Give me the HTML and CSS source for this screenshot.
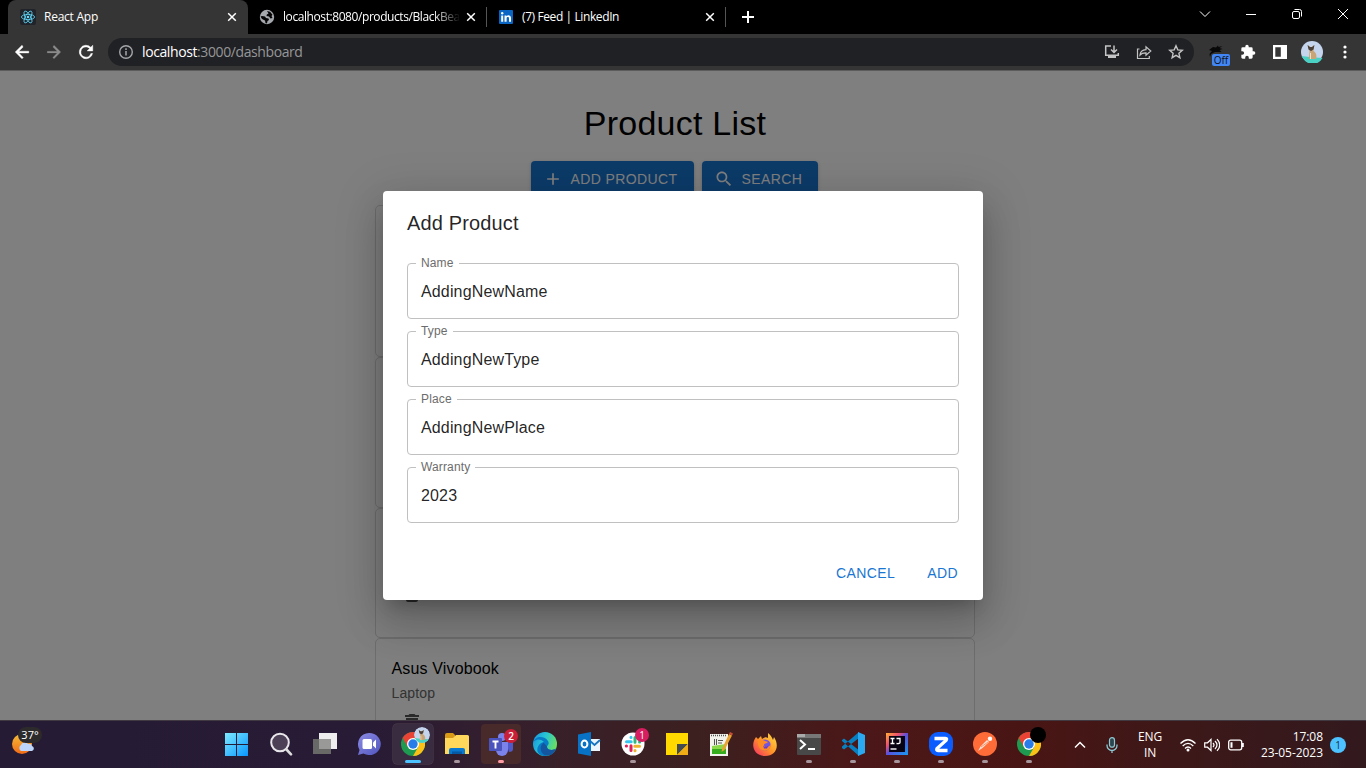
FILE: index.html
```html
<!DOCTYPE html>
<html lang="en">
<head>
<meta charset="utf-8">
<title>React App</title>
<link rel="stylesheet" href="styles.css">
</head>
<body>
<div class="screen">
  <header class="tabs">
    <div class="tab tab-active">
      <svg class="favicon" viewBox="0 0 16 16"><rect width="16" height="16" rx="2" fill="#20232a"/><g fill="none" stroke="#61dafb" stroke-width=".8"><ellipse cx="8" cy="8" rx="6.6" ry="2.6"/><ellipse cx="8" cy="8" rx="6.6" ry="2.6" transform="rotate(60 8 8)"/><ellipse cx="8" cy="8" rx="6.6" ry="2.6" transform="rotate(120 8 8)"/></g><circle cx="8" cy="8" r="1.3" fill="#61dafb"/></svg>
      <span class="tab-title title-react">React App</span>
      <svg class="close" viewBox="0 0 10 10"><path d="M1.2 1.2l7.6 7.6M8.8 1.2L1.2 8.8"/></svg>
    </div>
    <div class="tab tab-second">
      <svg class="favicon" viewBox="0 0 16 16"><circle cx="8" cy="8" r="7.2" fill="#a5a9ae"/><path d="M1.500 7.500l1.500-.5 3 .5 1 1.500 2.500.500.500 1.500-1.500 1-.5 2.500-1.500-.5-.5-2.500-3-1.500z" fill="#050505"/><path d="M8 2l3 .8 2.500 3-1 1.200 1 2-2 .5-1.500-2-2.500-.5.3-1.500 1.700-1z" fill="#050505"/></svg>
      <span class="tab-title title-local fade">localhost:8080/products/BlackBea</span>
      <svg class="close" viewBox="0 0 10 10"><path d="M1.2 1.2l7.6 7.6M8.8 1.2L1.2 8.8"/></svg>
    </div>
    <div class="tab tab-third">
      <svg class="favicon" viewBox="0 0 16 16"><rect x="1" y="1" width="14" height="14" rx="1" fill="#0a66c2"/><path d="M3.200 6.400h2v6.400h-2zM6.500 6.400h2v.9c1.100-1.800 4.500-1.400 4.500 1.600v3.900h-2V9.400c0-1.800-2.400-1.700-2.400 0v3.400h-2.100z" fill="#fff"/><circle cx="4.200" cy="4.200" r="1.200" fill="#fff"/></svg>
      <span class="tab-title title-feed">(7) Feed | LinkedIn</span>
      <svg class="close" viewBox="0 0 10 10"><path d="M1.2 1.2l7.6 7.6M8.8 1.2L1.2 8.8"/></svg>
    </div>
    <svg class="new-tab" viewBox="0 0 14 14"><path d="M7 1v12M1 7h12" stroke="#fff" stroke-width="2"/></svg>
    <div class="window-buttons">
      <svg viewBox="0 0 46 28"><path d="M18 11.5l5 5 5-5"/></svg>
      <svg viewBox="0 0 46 28"><path d="M18 14.500h10"/></svg>
      <svg viewBox="0 0 46 28"><rect x="18.500" y="11.500" width="7" height="7" rx="1.500"/><path d="M20.500 9.500h5a2 2 0 0 1 2 2v5"/></svg>
      <svg viewBox="0 0 46 28"><path d="M18 9l10 10M28 9L18 19"/></svg>
    </div>
  </header>

  <div class="toolbar">
    <svg class="nav-icon" viewBox="0 0 24 24"><path d="M21 11H7.800l5.600-5.600L12 3l-9 9 9 9 1.600-1.600L7.800 13.200H21z" fill="#fff" stroke="#fff" stroke-width=".6"/></svg>
    <svg class="nav-icon" viewBox="0 0 24 24"><path d="M3 11h13.200l-5.600-5.600L12 3l9 9-9 9-1.600-1.600 5.800-6.200H3z" fill="#8b8b8b" stroke="#8b8b8b" stroke-width=".3"/></svg>
    <svg class="nav-icon" viewBox="0 0 24 24"><path d="M18.400 5.600A9 9 0 1 0 20.800 14h-2.300A6.800 6.800 0 1 1 12 5.200c1.900 0 3.500.8 4.800 2L13.500 10.500H21V3z" fill="#fff" stroke="#fff" stroke-width=".6"/></svg>
    <div class="address">
      <svg class="info" viewBox="0 0 16 16"><circle cx="8" cy="8" r="6.300" fill="none" stroke="#a4a6a9" stroke-width="1.400"/><path d="M8 7v4.500M8 4.300v1.600" stroke="#a4a6a9" stroke-width="1.500"/></svg>
      <span class="url"><b>localhost</b>:3000/dashboard</span>
      <div class="address-actions">
        <svg viewBox="0 0 16 16"><path d="M7 2H1.700v9.300h12.600V9M10 1.500v6.500M7 5.500l3 3 3-3" fill="none" stroke="#c4c4c4" stroke-width="1.500"/><path d="M4 11h8v3H4z" fill="#c4c4c4"/></svg>
        <svg viewBox="0 0 16 16"><path d="M3.500 5H1.500v9.500h11.800v-2.500M4 11c.3-3.600 2.300-5.200 6-5.400V2.800l4.800 4.200-4.800 4.100V8.800C7.200 8.700 5.500 9.200 4 11z" fill="none" stroke="#c4c4c4" stroke-width="1.200"/></svg>
        <svg viewBox="0 0 16 16"><path d="M8 1.800l1.800 4.100 4.500.4-3.400 3 1 4.400L8 11.400l-3.900 2.300 1-4.400-3.400-3 4.500-.4z" fill="none" stroke="#c4c4c4" stroke-width="1.400"/></svg>
      </div>
    </div>
    <div class="extensions">
      <div class="ext off-ext">
        <svg viewBox="0 0 18 18"><path d="M2 7l4-3 3 .5 2-2 .5 1.500 4-1-3 2 3 1-3 1 2 2H8l-4 2-1 3-.5-3L5 8z" fill="#080808"/></svg>
        <span class="off">Off</span>
      </div>
      <svg class="ext" viewBox="0 0 24 24"><path d="M20.500 11H19V7a2 2 0 0 0-2-2h-4V3.500a2.500 2.500 0 0 0-5 0V5H4a2 2 0 0 0-2 2v3.800h1.500a2.700 2.700 0 0 1 0 5.400H2V20c0 1.100.9 2 2 2h3.800v-1.500a2.700 2.700 0 0 1 5.400 0V22H17a2 2 0 0 0 2-2v-4h1.500a2.500 2.500 0 0 0 0-5z" fill="#fff"/></svg>
      <svg class="ext" viewBox="0 0 16 16"><path d="M1 1h14v14H1zM3.300 3.300v9.400h5.500V3.300z" fill="#fff" fill-rule="evenodd"/></svg>
      <svg class="avatar" viewBox="0 0 22 22"><use href="#cat"/></svg>
      <svg class="menu" viewBox="0 0 4 14"><circle cx="2" cy="2" r="1.600"/><circle cx="2" cy="7" r="1.600"/><circle cx="2" cy="12" r="1.600"/></svg>
    </div>
  </div>

  <main class="page">
    <div class="content">
      <h1>Product List</h1>
      <div class="actions">
        <div class="contained"><svg viewBox="0 0 24 24"><path d="M19 13h-6v6h-2v-6H5v-2h6V5h2v6h6z"/></svg>ADD PRODUCT</div>
        <div class="contained search"><svg viewBox="0 0 24 24"><path d="M15.500 14h-.790l-.280-.270C15.410 12.590 16 11.110 16 9.500 16 5.910 13.090 3 9.500 3S3 5.910 3 9.500 5.910 16 9.500 16c1.610 0 3.090-.590 4.230-1.570l.270.280v.790l5 4.990L20.490 19zm-6 0C7.010 14 5 11.990 5 9.500S7.010 5 9.500 5 14 7.010 14 9.500 11.990 14 9.500 14z"/></svg>SEARCH</div>
      </div>
      <div class="card card-tall"></div>
      <div class="card card-mid"></div>
      <div class="card card-short"><svg class="trash" viewBox="0 0 24 24"><path d="M6 19c0 1.100.9 2 2 2h8c1.100 0 2-.9 2-2V7H6zM19 4h-3.500l-1-1h-5l-1 1H5v2h14z"/></svg></div>
      <div class="card card-last"><p class="name">Asus Vivobook</p><p class="kind">Laptop</p><svg class="trash" viewBox="0 0 24 24"><path d="M6 19c0 1.100.9 2 2 2h8c1.100 0 2-.9 2-2V7H6zM19 4h-3.500l-1-1h-5l-1 1H5v2h14z"/></svg></div>
    </div>
    <div class="backdrop">
      <section class="dialog">
        <h2>Add Product</h2>
        <div class="fields">
          <fieldset><legend>Name</legend><span>AddingNewName</span></fieldset>
          <fieldset><legend>Type</legend><span>AddingNewType</span></fieldset>
          <fieldset><legend>Place</legend><span>AddingNewPlace</span></fieldset>
          <fieldset><legend>Warranty</legend><span>2023</span></fieldset>
        </div>
        <footer><span>CANCEL</span><span>ADD</span></footer>
      </section>
    </div>
  </main>

  <div class="taskbar">
    <div class="weather">
      <svg viewBox="0 0 24 24"><circle cx="11" cy="13" r="10" fill="url(#sun)"/><path d="M10 20a3.500 3.500 0 0 1 0-6 4 4 0 0 1 7-1 3 3 0 0 1 4 2 2.600 2.600 0 0 1 0 5z" fill="#bfd6fb"/></svg>
      <span>37°</span>
    </div>
    <nav class="apps">
      <div class="app"><svg viewBox="0 0 24 24"><path d="M0 1h11v11H0zM12 1h11v11H12zM0 13h11v11H0zM12 13h11v11H12z" fill="url(#win)"/></svg></div>
      <div class="app"><svg viewBox="0 0 24 24"><circle cx="11" cy="10.500" r="8.800" fill="#4b4055" stroke="#e8e5eb" stroke-width="2"/><path d="M17.500 17.500l4.500 4.800" stroke="#ddd" stroke-width="2.600" stroke-linecap="round"/></svg></div>
      <div class="app"><svg viewBox="0 0 24 24"><rect x="6" y="1" width="18" height="16" fill="#eee"/><rect x="0" y="7" width="18" height="15" fill="#686966"/><path d="M6 7h12v10H6z" fill="#999a98"/></svg></div>
      <div class="app"><svg viewBox="0 0 24 24"><path d="M12 1a11.500 11 0 1 1-5.500 20.500L1 23l1.500-5A11.300 11.300 0 0 1 12 1z" fill="url(#chat)"/><rect x="5.500" y="7" width="9.500" height="10" rx="1.500" fill="#fff"/><path d="M16 10.500l3-3v9l-3-3z" fill="#fff"/></svg></div>
      <div class="app app-current"><svg viewBox="0 0 24 24"><use href="#chrome"/></svg><svg class="badge cat-badge" viewBox="0 0 22 22"><use href="#cat"/></svg><i class="mark mark-current"></i></div>
      <div class="app"><svg viewBox="0 0 24 24"><path d="M0 3q0-2 2-2h6l2 2v8H0z" fill="#d99a15"/><path d="M0 6h8l3-3h11.500q1.500 0 1.500 1.500V22H0z" fill="#ffd75b"/><path d="M4 22v-4q0-2 2-2h12q2 0 2 2v4z" fill="#0878d1"/><path d="M7 19.500h10V22H7z" fill="#0659a5"/></svg><i class="mark"></i></div>
      <div class="app app-alert"><svg viewBox="0 0 24 24"><circle cx="13" cy="5" r="4" fill="#7b83eb"/><circle cx="21" cy="8" r="2.500" fill="#5059c9"/><path d="M17 10h7v7q0 3-4 3z" fill="#5059c9"/><path d="M7 10h12v8a6 6 0 0 1-12 0z" fill="#7b83eb"/><rect y="6" width="13" height="13" rx="1" fill="#4b53bc"/><path d="M3.500 9.500h6M6.500 9.500v7" stroke="#fff" stroke-width="1.900"/></svg><b class="badge count">2</b><i class="mark mark-alert"></i></div>
      <div class="app"><svg viewBox="0 0 24 24"><circle cx="12" cy="12" r="12" fill="url(#edge)"/><path d="M0 11C2 3 12 4 15 9c2 4-1 4-1 6 0 3 6 4 9 1.500C20 23 12 26 7 22.500 1 19 6 10 11 10 7 6 2 7 0 11z" fill="#087bc7"/><path d="M10.500 10.500C5 15 8 24 15 23.600 20 23 22 19.500 23 16.500c-3 2.500-9 1.500-9-1.500 0-1-1.500-2.500-3.500-4.500z" fill="#13569f"/></svg></div>
      <div class="app"><svg viewBox="0 0 24 24"><path d="M11 7h12v12H11z" fill="#edf5fc"/><path d="M12 8l5.500 5L23 8" fill="none" stroke="#1675be" stroke-width="1.800"/><path d="M1 2.500L14 0v24L1 21.500z" fill="#0873c6"/><ellipse cx="7.500" cy="12" rx="2.900" ry="3.500" fill="none" stroke="#fff" stroke-width="2"/></svg></div>
      <div class="app"><svg viewBox="0 0 24 24"><circle cx="12" cy="12" r="11.500" fill="#fff"/><g fill="none" stroke-width="3" stroke-linecap="round"><path d="M10.200 9.800H5.500M10 5.300v.2" stroke="#36c5f0"/><path d="M14 5.500v4.700M18.500 10h.2" stroke="#2eb67d"/><path d="M10 18.500v-4.700M5.500 14h-.2" stroke="#e01e5a"/><path d="M13.800 14.200h4.700M14 18.500v.2" stroke="#ecb22e"/></g></svg><b class="badge count pink">1</b><i class="mark"></i></div>
      <div class="app"><svg viewBox="0 0 24 24"><path d="M1 1h22v22H1z" fill="#ffd900"/><path d="M12 12h11L12 23z" fill="#444b50"/><path d="M23 12v11H12z" fill="#f0ad16"/></svg></div>
      <div class="app"><svg viewBox="0 0 24 24"><path d="M1 2h18v22H1z" fill="#f2f2ed"/><path d="M3 14l14-2v10H3z" fill="#8bd84a"/><path d="M3 17h14v5H3z" fill="#35ad1c"/><path d="M2 3.500h16" stroke="#555" stroke-width="1.500" stroke-dasharray="1 1"/><path d="M5.500 7v6M7.500 7v6M9 8.500h5M9 11h4" stroke="#555"/><path d="M13 17L20 2l3 1.500L15.500 18l-3 2z" fill="#e8a330"/><path d="M20 2l1-2 3 1.500-1 2z" fill="#c84d35"/></svg></div>
      <div class="app"><svg viewBox="0 0 24 24"><path d="M3 5l2 2 3-3 1 3c3-2 4-2 6-1l0-5c3 2 4 5 5 7l1-3c6 9 2 19-9 19C1 24-3 13 3 5z" fill="url(#fox)"/><circle cx="12" cy="13" r="5.600" fill="#7455dc"/><path d="M5 8c4-1 5 0 7 1l3 1c-1 2-4 1-4 3 0 3 5 3 7-1 0 10-15 9-13-4z" fill="#ff8b25"/><path d="M10 13c1 3 5 2 6-.500l-2 4h-3z" fill="#693bd1"/></svg></div>
      <div class="app"><svg viewBox="0 0 24 24"><rect y="2" width="24" height="21" rx="1" fill="#484848"/><path d="M0 2h24v3.500H0z" fill="#aaa"/><path d="M8 2h16v3.500H8z" fill="#777"/><path d="M3 8l5 4.500L3 17" fill="none" stroke="#fff" stroke-width="2"/><path d="M11 17h7" stroke="#fff" stroke-width="2"/></svg><i class="mark"></i></div>
      <div class="app"><svg viewBox="0 0 24 24"><path d="M1 8l2-1.500 15 11.700V24L1 9zM1 16l2 1.500L18 6V0L1 14.500z" fill="#087fc1"/><path d="M17 0l7 3v18l-7 3z" fill="#2aa9f1"/></svg><i class="mark"></i></div>
      <div class="app"><svg viewBox="0 0 24 24"><path d="M1 1h22v22H1z" fill="url(#ij)"/><path d="M4 4h16v16H4z" fill="#080313"/><path d="M5.500 6.500h4M7.500 6.500v5M5.500 11.500h4M11.500 6.500h3.500v4q0 1.300-3.500 1" fill="none" stroke="#fff" stroke-width="1.300"/><path d="M5.500 17h6" stroke="#fff" stroke-width="1.400"/></svg><i class="mark"></i></div>
      <div class="app"><svg viewBox="0 0 24 24"><rect width="24" height="24" rx="9" fill="#0b5cff"/><path d="M5.500 6.500h11q2 0 .5 2l-9 8q-1 2 1 2h9.500" fill="none" stroke="#fff" stroke-width="3.300"/></svg><i class="mark"></i></div>
      <div class="app"><svg viewBox="0 0 24 24"><circle cx="12" cy="12" r="12" fill="#ff6c37"/><path d="M5 19l2.500-4.500L14 8l2 2-6.500 6z" fill="#ffe3d8"/><circle cx="17" cy="6.800" r="2.200" fill="#fff"/><path d="M8 15l7-5" stroke="#ff6c37" stroke-width=".7"/></svg><i class="mark"></i></div>
      <div class="app"><svg viewBox="0 0 24 24"><use href="#chrome"/></svg><b class="badge black"></b><i class="mark"></i></div>
    </nav>
    <div class="tray">
      <svg class="chevron" viewBox="0 0 12 8"><path d="M1 6.500l5-5 5 5" fill="none" stroke="#fff" stroke-width="1.500"/></svg>
      <svg class="mic" viewBox="0 0 12 16"><rect x="3.500" y=".7" width="5" height="9.500" rx="2.500" fill="#2c4650" stroke="#8dcad5" stroke-width="1.200"/><path d="M1 7.500v1a5 5 0 0 0 10 0v-1M6 13.500V16" fill="none" stroke="#8dcad5" stroke-width="1.300"/></svg>
      <div class="language"><span>ENG</span><span>IN</span></div>
      <div class="status">
        <svg viewBox="0 0 16 16"><g fill="none" stroke="#fff" stroke-width="1.300"><path d="M.5 6.500q7.500-7.500 15 0M2.700 9q5.300-5.200 10.600 0M5 11.500q3-3 6 0"/></g><circle cx="8" cy="13" r="1.500" fill="#fff"/></svg>
        <svg viewBox="0 0 16 16"><path d="M.7 5.800h2.800L7 2.500v11l-3.500-3.300H.7zM9 6q2 2 0 4M11 4q4 4 0 8M13 2.200q5.500 5.800 0 11.600" fill="none" stroke="#fff" stroke-width="1.200"/></svg>
        <svg viewBox="0 0 16 16"><rect x=".7" y="3.200" width="13" height="9.600" rx="2" fill="none" stroke="#fff" stroke-width="1.300"/><path d="M2.500 5.200h2v5.600h-2zM14 6h1.800v4H14z" fill="#fff"/></svg>
      </div>
      <div class="clock"><span>17:08</span><span>23-05-2023</span></div>
      <span class="notice">1</span>
    </div>
  </div>
</div>

<svg class="defs" width="0" height="0">
  <defs>
    <linearGradient id="sun" x2="0" y2="1"><stop stop-color="#f6bd38"/><stop offset="1" stop-color="#f26b16"/></linearGradient>
    <linearGradient id="win" x2="1" y2="1"><stop stop-color="#7eeaff"/><stop offset="1" stop-color="#0795ff"/></linearGradient>
    <linearGradient id="chat" x2="1" y2="1"><stop stop-color="#8d8ce5"/><stop offset="1" stop-color="#5055bd"/></linearGradient>
    <linearGradient id="edge" x2="1" y2=".4"><stop stop-color="#168fdd"/><stop offset=".5" stop-color="#27c5d6"/><stop offset="1" stop-color="#66df65"/></linearGradient>
    <linearGradient id="fox" x1="1" x2="0" y2="1"><stop stop-color="#ffe14a"/><stop offset=".5" stop-color="#ff9627"/><stop offset="1" stop-color="#f7276a"/></linearGradient>
    <linearGradient id="ij" x2="1" y2="1"><stop stop-color="#ffae36"/><stop offset=".3" stop-color="#f1516b"/><stop offset=".5" stop-color="#5b50dc"/><stop offset="1" stop-color="#149bf1"/></linearGradient>
    <symbol id="chrome" viewBox="0 0 24 24"><circle cx="12" cy="12" r="12" fill="#1e9b50"/><path d="M1.600 6A12 12 0 0 1 22.400 6H12l-5.200 9z" fill="#e94335"/><path d="M22.400 6A12 12 0 0 1 12 24l5.200-9L12 6z" fill="#fbc116"/><circle cx="12" cy="12" r="6" fill="#fff"/><circle cx="12" cy="12" r="4.700" fill="#287de9"/></symbol>
    <symbol id="cat" viewBox="0 0 22 22"><circle cx="11" cy="11" r="11" fill="#c5d5ee"/><path d="M.5 15l8 1 13 1A11 11 0 0 1 2 17z" fill="#4bd0c4"/><path d="M8 18l.5-8L7 4l2 2h2l2-2-.5 6c3 2 3.500 5 2.500 8z" fill="#c7a577"/><path d="M6.500 4l2.500 2h2l2.500-2-1 4.500-2.500 1.500-2.500-1.500z" fill="#4b4038"/><path d="M9.500 12v6" stroke="#f3dfbd"/></symbol>
  </defs>
</svg>
</body>
</html>
```
FILE: styles.css
```css
* { box-sizing: border-box; }
body { margin: 0; overflow: hidden; font-family: "Liberation Sans", Arial, sans-serif; }
h1, h2, p { margin: 0; font-weight: 400; }
svg { display: block; flex: none; }
.defs { position: absolute; }
.screen { width: 1366px; height: 768px; display: flex; flex-direction: column; overflow: hidden; }

.tabs { height: 34px; flex: none; display: flex; background: #000; color: #fff; font: 12px/16px "Open Sans", sans-serif; padding-left: 8px; }
.tab { display: flex; align-items: center; height: 34px; }
.tab-active { width: 240px; padding: 0 11px 0 12px; background: #353535; border-radius: 8px 8px 0 0; }
.tab-second { width: 239px; padding: 0 11px; }
.tab-third { width: 239px; padding: 0 11px; }
.tab-second, .tab-third { background: linear-gradient(#555, #555) right center / 1px 20px no-repeat; }
.favicon { width: 16px; height: 16px; }
.tab-title { flex: 1; margin: 0 8px; white-space: nowrap; }
.title-react { letter-spacing: -.25px; }
.title-local { letter-spacing: -.42px; margin-right: 0; }
.title-feed { letter-spacing: -.4px; }
.fade { mask-image: linear-gradient(90deg, #000 82%, transparent 97%); }
.close { width: 10px; height: 10px; stroke: #fff; stroke-width: 1.5; fill: none; }
.new-tab { width: 14px; height: 14px; margin: 10px 0 0 15px; }
.window-buttons { margin-left: auto; display: flex; }
.window-buttons svg { width: 46px; height: 28px; fill: none; stroke: #fff; }

.toolbar { height: 37px; flex: none; background: #353535; border-bottom: 1px solid #5c5c5c; display: flex; align-items: center; padding: 0 15px 0 13px; }
.nav-icon { width: 18px; height: 18px; margin-right: 14px; }
.address { width: 1086px; height: 28px; border-radius: 14px; background: #202124; display: flex; align-items: center; padding: 0 10px; margin-left: -1px; }
.info { width: 16px; height: 16px; }
.url { color: #969799; font: 14px/20px "Open Sans", sans-serif; letter-spacing: -.4px; margin-left: 8px; }
.url b { color: #fff; font-weight: 400; }
.address-actions { margin-left: auto; display: flex; gap: 16px; }
.address-actions svg { width: 16px; height: 16px; }
.extensions { display: flex; align-items: center; flex: 1; padding-left: 13px; }
.ext { width: 16px; height: 16px; margin-right: 16px; }
.off-ext { width: 18px; height: 18px; position: relative; margin-right: 15px; }
.off { position: absolute; left: 5px; top: 11px; width: 18px; height: 12px; border-radius: 2px; background: #4285f4; color: #111; font: 10px/12px "Open Sans", sans-serif; text-align: center; }
.avatar { width: 22px; height: 22px; margin-left: -3px; }
.menu { width: 4px; height: 14px; margin-left: auto; margin-right: 4.5px; fill: #fff; }

.page { height: 649px; flex: none; position: relative; overflow: hidden; background: #fff; }
.content { width: 600px; margin-left: 375px; display: flex; flex-direction: column; align-items: center; padding-top: 31px; }
h1 { font-size: 34px; line-height: 42px; letter-spacing: .25px; }
.actions { display: flex; gap: 8px; width: 288px; margin: 17px 0 8px; }
.contained { width: 163px; height: 36px; padding-left: 12px; display: flex; align-items: center; border-radius: 4px; background: #1976d2; color: #fff; font-size: 14px; letter-spacing: .4px; white-space: nowrap; box-shadow: 0 3px 1px -2px #0003, 0 2px 2px #0002, 0 1px 5px #0002; }
.search { width: 116px; }
.contained svg { width: 20px; height: 20px; fill: #fff; margin-right: 7.5px; }
.card { width: 600px; border: 1px solid #dadada; border-radius: 5px; flex: none; padding: 15px; }
.card-tall { height: 152px; }
.card-mid { height: 151px; }
.card-short { height: 130px; padding-top: 72px; }
.card-last { height: 152px; padding-top: 16px; }
.trash { width: 24px; height: 24px; margin-left: 9px; fill: #555; }
.card-last .trash { margin-top: 8px; }
.name { padding-left: .5px; font-size: 16px; line-height: 28px; letter-spacing: .15px; }
.kind { padding-left: .5px; font-size: 14px; line-height: 20px; letter-spacing: .15px; color: #666; }

.backdrop { position: absolute; inset: 0; background: rgba(0,0,0,.5); display: flex; justify-content: center; align-items: flex-start; padding-top: 120px; }
.dialog { width: 600px; height: 409px; background: #fff; border-radius: 4px; color: rgba(0,0,0,.87); box-shadow: 0 11px 15px -7px #0003, 0 24px 38px 3px rgba(0,0,0,.14), 0 9px 46px 8px rgba(0,0,0,.12); }
.dialog h2 { font-size: 20px; line-height: 32px; letter-spacing: .15px; padding: 16px 24px; }
.fields { padding: 2px 24px 0; display: flex; flex-direction: column; gap: 6px; }
fieldset { width: 552px; height: 62px; margin: 0; min-width: 0; border: 1px solid #c0c0c0; border-radius: 4px; padding: 0 13px 0 8px; }
legend { font-size: 12px; line-height: 12px; height: 12px; letter-spacing: .14px; color: #6c6c6c; padding: 0 5px; }
fieldset span { display: block; padding-left: 5px; font-size: 16px; line-height: 24px; margin-top: 11px; letter-spacing: .15px; }
.dialog footer { display: flex; justify-content: flex-end; gap: 32px; padding: 40px 25px 0; font-size: 14px; line-height: 20px; letter-spacing: .4px; color: #1976d2; }

.taskbar { height: 48px; flex: none; display: flex; background: linear-gradient(90deg, #251b34 0, #281b35 27%, #38202a 40%, #3c2020 51%, #4b1718 63%, #491514 75%, #3d1818 86%, #32191e 100%); border-top: 1px solid #403941; color: #fff; font-family: "Open Sans", sans-serif; }
.weather { width: 215px; position: relative; padding: 10px 0 0 11px; }
.weather svg { width: 24px; height: 24px; }
.weather span { position: absolute; left: 18px; top: 6px; width: 24px; height: 16px; border-radius: 8px; background: #2d2a2b; text-align: center; font-size: 11px; line-height: 16px; }
.apps { display: flex; }
.app { width: 44px; height: 47px; flex: none; position: relative; display: flex; justify-content: center; padding-top: 11px; }
.app > svg:first-child { width: 24px; height: 24px; position: relative; }
.app-current::before, .app-alert::before { content: ""; position: absolute; left: 2px; top: 3px; width: 40px; height: 40px; border-radius: 4px; background: #392b40; }
.app-current::before { box-shadow: 0 0 0 .5px #51414f; }
.app-alert::before { background: #482a2a; }
.app .badge { position: absolute; left: 23px; top: 6px; width: 16px; height: 16px; border-radius: 50%; }
.app .count { left: 25px; top: 8px; width: 14px; height: 14px; background: #c91f38; font: 600 10px/14px "Open Sans", sans-serif; text-align: center; }
.app .pink { background: #d71e60; left: 24px; top: 7px; font-weight: 400; }
.app .black { background: #000; }
.mark { position: absolute; left: 19px; bottom: 5px; width: 6px; height: 3px; border-radius: 2px; background: #a6959b; }
.mark-current { left: 14px; width: 16px; background: #4cc2ff; }
.mark-alert { background: #ff9ba7; }
.tray { display: flex; align-items: center; flex: 1; padding-left: 23px; }
.chevron { width: 12px; height: 8px; }
.mic { width: 12px; height: 16px; margin-left: 20px; }
.language { width: 32px; margin-left: 16px; display: flex; flex-direction: column; align-items: center; font-size: 12px; line-height: 16px; letter-spacing: -.1px; }
.status { display: flex; gap: 8px; margin-left: 14px; }
.status svg { width: 16px; height: 16px; }
.clock { margin-left: auto; display: flex; flex-direction: column; align-items: flex-end; font-size: 12px; line-height: 16px; letter-spacing: -.05px; }
.notice { width: 16px; height: 16px; border-radius: 50%; background: #4cc2ff; color: #203345; text-align: center; font-size: 10px; line-height: 16px; margin: 0 20px 0 7px; }
```
